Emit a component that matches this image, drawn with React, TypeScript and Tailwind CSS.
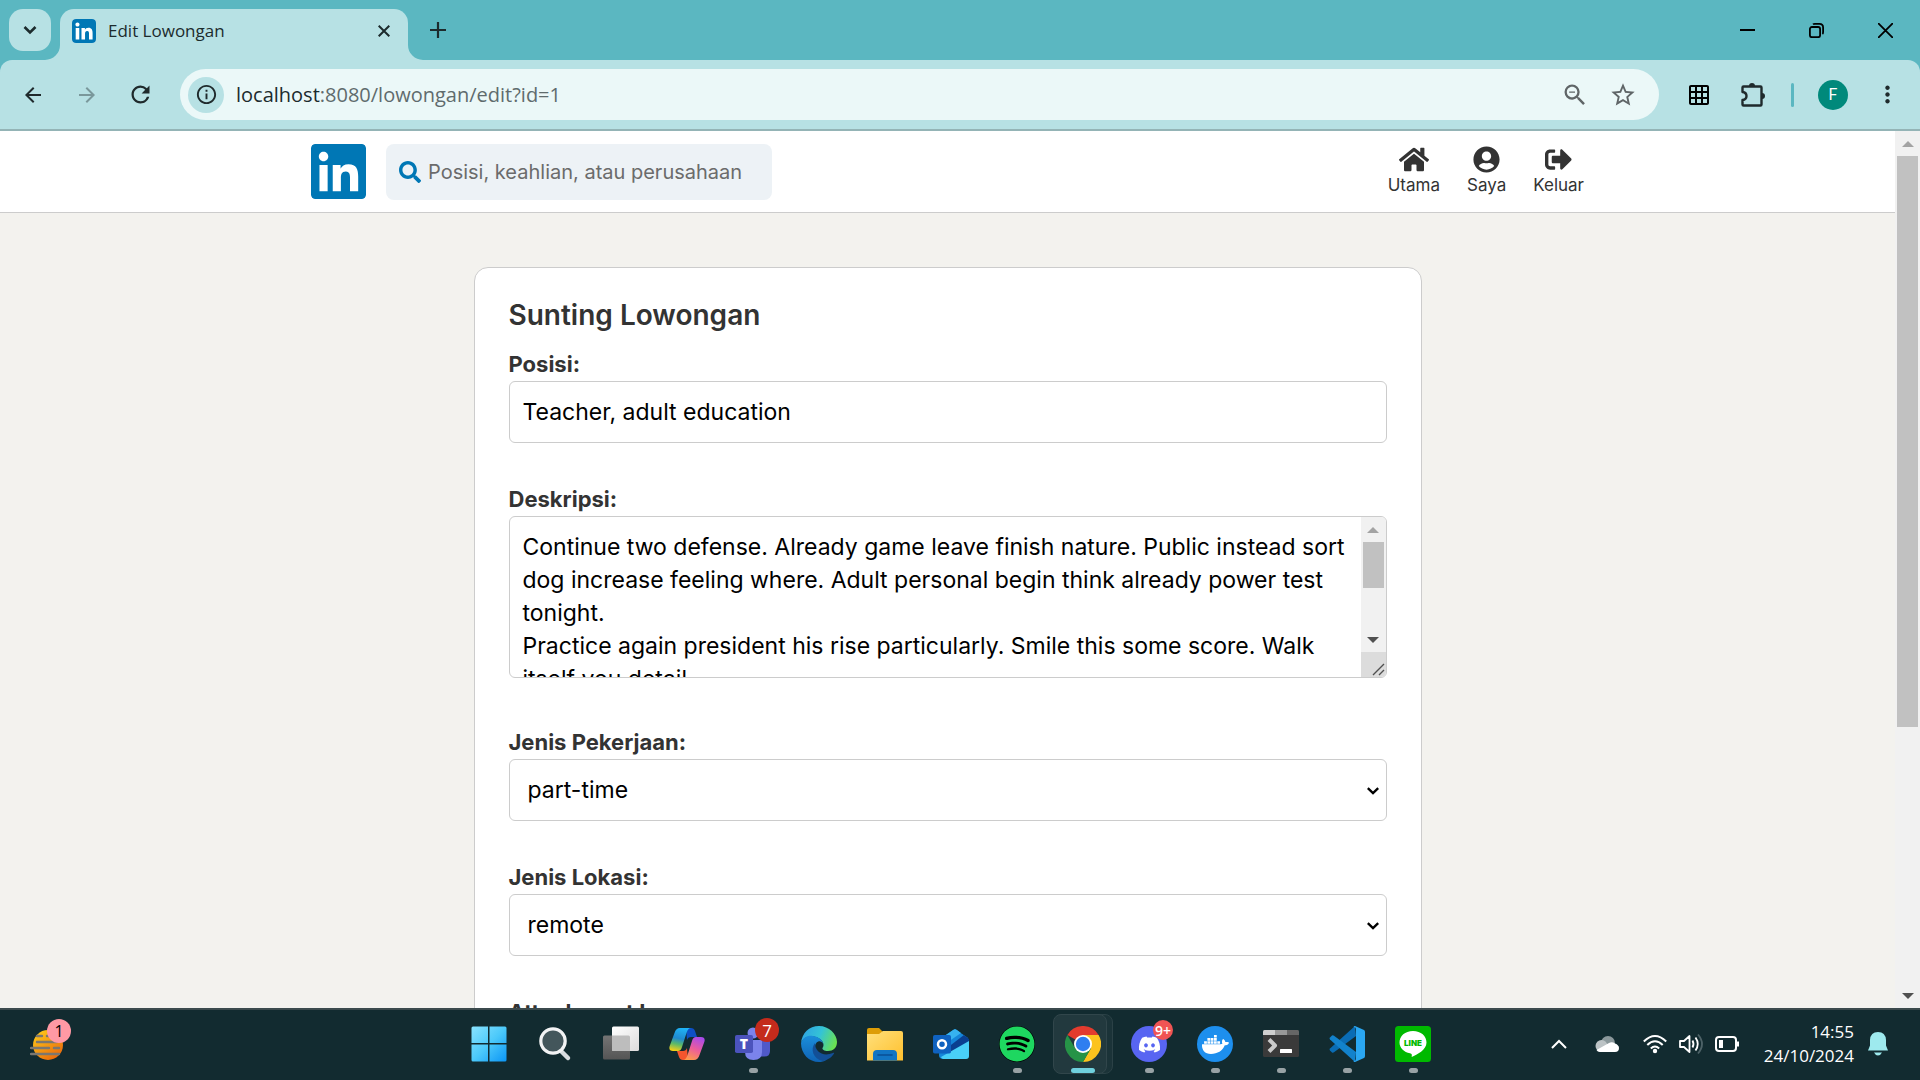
import React from "react";
import { FaHome, FaUserCircle, FaSignOutAlt, FaSearch, FaLinkedin, FaSpotify, FaDiscord, FaDocker } from "react-icons/fa";
import {
  MdArrowBack,
  MdArrowForward,
  MdRefresh,
  MdInfoOutline,
  MdZoomOut,
  MdStarOutline,
  MdGridOn,
  MdMoreVert,
} from "react-icons/md";

const description =
  "Continue two defense. Already game leave finish nature. Public instead sort dog increase feeling where. Adult personal begin think already power test tonight.\nPractice again president his rise particularly. Smile this some score. Walk itself you detail.";

function TabCorner({ side }: { side: "left" | "right" }) {
  return (
    <svg viewBox="0 0 15 15" className="size-[15px] self-end" fill="#b7e1e4" aria-hidden="true">
      <path d={side === "left" ? "M15 0V15H0A15 15 0 0 0 15 0Z" : "M0 0V15H15A15 15 0 0 1 0 0Z"} />
    </svg>
  );
}

function LinkedinMark({ className }: { className?: string }) {
  return (
    <span className="grid bg-white">
      <FaLinkedin className={className} color="#0077b5" viewBox="0 32 448 448" />
    </span>
  );
}

function TabStrip() {
  return (
    <div className="flex h-[60px] items-center pl-[9px] text-black">
      <button aria-label="Cari tab" className="grid size-[42px] shrink-0 place-items-center rounded-[14px] bg-[#b7e1e4]">
        <svg viewBox="0 0 14 10" className="w-3.5" fill="none" stroke="#1c2b2d" strokeWidth="2.6">
          <path d="M1.5 2 7 7.5 12.5 2" />
        </svg>
      </button>
      <div className="-ml-1.5 flex h-full items-end">
        <TabCorner side="left" />
        <div className="flex h-[51px] w-[348px] items-center rounded-t-[14px] bg-[#b7e1e4] pr-4 pb-2 pl-3">
          <span className="grid size-6 place-items-center overflow-hidden rounded-sm">
            <LinkedinMark className="size-6" />
          </span>
          <span className="ml-3 flex-1 font-['Open_Sans',sans-serif] text-[17px] text-[#1c2b2d]">Edit Lowongan</span>
          <button aria-label="Tutup tab" className="grid size-4 place-items-center">
            <svg viewBox="0 0 12 12" className="size-3" stroke="#1c2b2d" strokeWidth="2">
              <path d="M.7.7 11.3 11.3M11.3.7.7 11.3" />
            </svg>
          </button>
        </div>
        <TabCorner side="right" />
      </div>
      <button aria-label="Tab baru" className="ml-1.5 grid size-[18px] place-items-center">
        <svg viewBox="0 0 16 16" className="size-4" stroke="#1c2b2d" strokeWidth="2.2">
          <path d="M8 0V16M0 8H16" />
        </svg>
      </button>
      <div className="ml-auto flex h-full">
        <button aria-label="Minimalkan" className="grid w-[69px] place-items-center">
          <svg viewBox="0 0 15 15" className="size-[15px]" stroke="black" strokeWidth="2">
            <path d="M0 7H15" />
          </svg>
        </button>
        <button aria-label="Pulihkan" className="grid w-[69px] place-items-center">
          <svg viewBox="0 0 15 15" className="size-[15px]" fill="none" stroke="black" strokeWidth="1.8">
            <rect x="0.9" y="4" width="10.2" height="10.2" rx="2" />
            <path d="M4 1.4Q4.5 .9 6 .9H10.5Q14.1 .9 14.1 4.5V9Q14.1 10.5 13.4 11" />
          </svg>
        </button>
        <button aria-label="Tutup" className="grid w-[69px] place-items-center">
          <svg viewBox="0 0 15 15" className="size-[15px]" stroke="black" strokeWidth="1.8">
            <path d="M0 0 15 15M15 0 0 15" />
          </svg>
        </button>
      </div>
    </div>
  );
}

function ExtensionIcon() {
  return (
    <svg viewBox="0 0 26 26" className="size-[26px]" fill="none" stroke="#1f2a2c" strokeWidth="2.4" strokeLinejoin="round">
      <path d="M3.500 4.500H20.500Q21.500 4.500 21.500 5.500V22.500Q21.500 23.500 20.500 23.500H3.500Q2.500 23.500 2.500 22.500V18Q6.500 17.500 6.500 14T2.500 10V5.500Q2.500 4.500 3.500 4.500Z" />
      <path d="M9 4A3 3 0 0 1 15 4ZM22 11A3 3 0 0 1 22 17Z" fill="#1f2a2c" stroke="none" />
    </svg>
  );
}

function Toolbar() {
  return (
    <div className="flex h-[71px] items-center rounded-t-[12px] border-b-2 border-[#94b4b6] bg-[#b7e1e4] pr-[19px] pl-[21px] text-[#1f2a2c]">
      <button aria-label="Kembali" className="mr-[30px]"><MdArrowBack size={24} /></button>
      <button aria-label="Maju" className="mr-7 text-[#7a989b]"><MdArrowForward size={24} /></button>
      <button aria-label="Muat ulang" className="mr-[26px]"><MdRefresh size={27} /></button>
      <div className="flex h-[51px] flex-1 items-center rounded-full bg-[#ebf8f8] pr-[22px] pl-2">
        <button aria-label="Info situs" className="grid size-9 place-items-center rounded-full bg-[#b7e1e4]">
          <MdInfoOutline size={23} />
        </button>
        <span className="ml-3 flex-1 font-['Open_Sans',sans-serif] text-[20px] text-[#5f6b6d]">
          <span className="text-[#1c2b2d]">localhost</span>:8080/lowongan/edit?id=1
        </span>
        <button aria-label="Perkecil" className="mr-5 text-[#5f6567]"><MdZoomOut size={28} /></button>
        <button aria-label="Tandai" className="text-[#5f6567]"><MdStarOutline size={28} /></button>
      </div>
      <button aria-label="Kisi" className="ml-7 text-black"><MdGridOn size={24} /></button>
      <button aria-label="Ekstensi" className="ml-[29px]"><ExtensionIcon /></button>
      <span className="ml-[25px] h-6 w-[3px] rounded-full bg-[#5bb7c1]" />
      <button aria-label="Profil" className="ml-6 grid size-[30px] place-items-center rounded-full bg-[#00897b] font-['Roboto',sans-serif] text-[16px] text-white">
        F
      </button>
      <button aria-label="Menu" className="ml-[26px]"><MdMoreVert size={27} /></button>
    </div>
  );
}

const navItems = [
  { label: "Utama", Icon: FaHome, iconClass: "h-[27px] w-[30px]" },
  { label: "Saya", Icon: FaUserCircle, iconClass: "size-[27px]" },
  { label: "Keluar", Icon: FaSignOutAlt, iconClass: "size-[27px]" },
];

function SiteHeader() {
  return (
    <header className="border-b border-[#ccc] bg-white">
      <div className="mx-auto flex h-[81px] max-w-[1273px] items-center">
        <a href="#beranda" aria-label="LinkedIn" className="overflow-hidden rounded-[4px]">
          <LinkedinMark className="size-[55px]" />
        </a>
        <label className="ml-5 flex h-14 w-[386px] items-center rounded-lg bg-[#edf2f6] pl-[13px]">
          <FaSearch size={22} color="#0077b5" aria-label="Cari" />
          <input
            placeholder="Posisi, keahlian, atau perusahaan"
            className="ml-[7px] min-w-0 flex-1 bg-transparent text-[20px] outline-none placeholder:text-[#6b6b6b]"
          />
        </label>
        <nav className="ml-auto flex gap-[27px] text-[#333]">
          {navItems.map(({ label, Icon, iconClass }) => (
            <a key={label} href={`#${label.toLowerCase()}`} className="flex flex-col items-center text-[17px] leading-6">
              <Icon className={iconClass} />
              {label}
            </a>
          ))}
        </nav>
      </div>
    </header>
  );
}

function Triangle({ up = false, color }: { up?: boolean; color: string }) {
  return (
    <svg viewBox="0 0 12 6" className="w-3" fill={color} aria-hidden="true">
      <path d={up ? "M0 6 6 0 12 6Z" : "M0 0 6 6 12 0Z"} />
    </svg>
  );
}

function Scrollbar({ thumb }: { thumb: string }) {
  return (
    <div className="flex min-h-0 w-[25px] flex-1 flex-col items-center bg-[#f1f1f1]">
      <span className="grid h-[25px] shrink-0 place-items-center"><Triangle up color="#a3a3a3" /></span>
      <div className="min-h-0 w-full flex-1 px-0.5"><div className={`bg-[#c1c1c1] ${thumb}`} /></div>
      <span className="grid h-[25px] shrink-0 place-items-center"><Triangle color="#505050" /></span>
    </div>
  );
}

const labelClass = "block text-[22px] leading-[33px] font-bold text-[#333]";

function SelectField({ id, label, value, options }: { id: string; label: string; value: string; options: string[] }) {
  return (
    <div>
      <label htmlFor={id} className={labelClass}>{label}</label>
      <div className="relative">
        <select
          id={id}
          defaultValue={value}
          className="block h-[62px] w-full appearance-none rounded-md border border-[#ccc] bg-white px-[18px] text-[23px] text-black"
        >
          {options.map((o) => <option key={o}>{o}</option>)}
        </select>
        <svg viewBox="0 0 12 8" className="pointer-events-none absolute top-7 right-2 w-3" fill="none" stroke="black" strokeWidth="2.4">
          <path d="M.8 1.2 6 6.2 11.2 1.2" />
        </svg>
      </div>
    </div>
  );
}

function EditForm() {
  return (
    <form className="mx-auto mt-[54px] max-w-[948px] rounded-[14px] border border-[#ccc] bg-white px-[34px] pt-[27px]">
      <h1 className="text-[28px] leading-10 font-semibold text-[#333]">Sunting Lowongan</h1>
      <div className="mt-[13px] flex flex-col gap-10">
        <div>
          <label htmlFor="posisi" className={labelClass}>Posisi:</label>
          <input
            id="posisi"
            defaultValue="Teacher, adult education"
            className="block h-[62px] w-full rounded-md border border-[#ccc] px-[13px] text-[23px] text-black"
          />
        </div>
        <div className="mb-2">
          <label htmlFor="deskripsi" className={labelClass}>Deskripsi:</label>
          <div className="flex h-[162px] overflow-hidden rounded-md border border-[#ccc]">
            <textarea
              id="deskripsi"
              defaultValue={description}
              className="min-w-0 flex-1 resize-none overflow-hidden pt-[14px] pr-2 pl-[13px] text-[23px] leading-[33px] text-black outline-none"
            />
            <div className="flex flex-col">
              <Scrollbar thumb="h-[46px]" />
              <svg viewBox="0 0 25 25" className="size-[25px] bg-[#dcdcdc]" stroke="#505050" strokeWidth="1.4">
                <path d="M12 23 23 12M18 23 23 18" />
              </svg>
            </div>
          </div>
        </div>
        <SelectField id="jenis-pekerjaan" label="Jenis Pekerjaan:" value="part-time" options={["full-time", "part-time", "internship"]} />
        <SelectField id="jenis-lokasi" label="Jenis Lokasi:" value="remote" options={["on-site", "hybrid", "remote"]} />
        <h2 className={labelClass}>Attachment Lowongan:</h2>
      </div>
    </form>
  );
}

function WindowsIcon() {
  return (
    <svg viewBox="0 0 36 36" className="size-9">
      <defs>
        <linearGradient id="win" gradientUnits="userSpaceOnUse" x1="0" y1="0" x2="36" y2="36">
          <stop stopColor="#8be4ff" /><stop offset=".5" stopColor="#4cc9fa" /><stop offset="1" stopColor="#0994f5" />
        </linearGradient>
      </defs>
      <path fill="url(#win)" d="M2 .5H17V17H.5V2Q.5 .5 2 .5ZM18.5 .5H34Q35.5 .5 35.5 2V17H18.5ZM.5 18.5H17V35.5H2Q.5 35.5 .5 34ZM18.5 18.5H35.5V34Q35.5 35.5 34 35.5H18.5Z" />
    </svg>
  );
}

function SearchIcon() {
  return (
    <svg viewBox="0 0 36 36" className="size-9">
      <path d="M23 24 31 32" stroke="#d9dde0" strokeWidth="4.5" strokeLinecap="round" />
      <circle cx="16" cy="15" r="12.2" fill="#43565b" stroke="#f2f3f4" strokeWidth="3.2" />
    </svg>
  );
}

function TaskViewIcon() {
  return (
    <svg viewBox="0 0 36 36" className="size-9">
      <defs>
        <linearGradient id="tv" x2="1" y2="1"><stop stopColor="#fff" /><stop offset="1" stopColor="#dcdcdc" /></linearGradient>
        <linearGradient id="tvb" x2="0" y2="1"><stop stopColor="#747474" /><stop offset="1" stopColor="#555" /></linearGradient>
      </defs>
      <rect x="0" y="9.5" width="27" height="24" rx="1.5" fill="url(#tvb)" />
      <rect x="9" y=".5" width="27" height="24.5" rx="1.5" fill="url(#tv)" />
      <path d="M9 9.5H25.5Q27 9.5 27 11V25H10.5Q9 25 9 23.5Z" fill="#bdbdbd" />
    </svg>
  );
}

function CopilotIcon() {
  return (
    <svg viewBox="0 0 36 36" className="size-9">
      <defs>
        <linearGradient id="cpa" x1=".5" x2=".3" y2="1"><stop stopColor="#1fb2f5" /><stop offset=".45" stopColor="#2089cf" /><stop offset=".7" stopColor="#5ab96a" /><stop offset="1" stopColor="#f5cf16" /></linearGradient>
        <linearGradient id="cpb" x1=".7" x2=".3" y2="1"><stop stopColor="#a94bea" /><stop offset=".5" stopColor="#ec5c9c" /><stop offset="1" stopColor="#fd9a4b" /></linearGradient>
      </defs>
      <path d="M17 2H22Q25 2 26 5L28 11H22Q19 11 18 14Z" fill="#0d4fc4" />
      <path d="M19 34H14Q11 34 10 31L8 25H14Q17 25 18 22Z" fill="#f4552e" />
      <path d="M22 2H11Q7 2 5.5 7L.7 20Q-.8 25 4 25H9Q12 25 13 21L17.5 7Q19 2 22 2Z" fill="url(#cpa)" />
      <path d="M14 34H25Q29 34 30.5 29L35.3 16Q36.800 11 32 11H27Q24 11 23 15L18.5 29Q17 34 14 34Z" fill="url(#cpb)" />
    </svg>
  );
}

function TeamsIcon() {
  return (
    <span className="relative">
      <svg viewBox="0 0 36 36" className="size-9">
        <circle cx="18" cy="7" r="5.5" fill="#7b83eb" />
        <circle cx="29" cy="9" r="4" fill="#5059c9" />
        <path d="M24 14H35V25Q35 30.5 29.5 30.5H24Z" fill="#5059c9" />
        <path d="M10 14H27V26Q27 34 18.5 34T10 26Z" fill="#7b83eb" />
        <rect x="0" y="9" width="18" height="18" rx="1.8" fill="#4b53bc" />
        <text x="9" y="23" textAnchor="middle" fontFamily="Open Sans" fontWeight="800" fontSize="14" fill="white">T</text>
      </svg>
      <span className="absolute -top-2 left-[20px] grid size-6 place-items-center rounded-full bg-[#c42b1c] font-['Open_Sans',sans-serif] text-[17px] text-white">7</span>
    </span>
  );
}

function EdgeIcon() {
  return (
    <svg viewBox="0 0 36 36" className="size-9">
      <defs>
        <linearGradient id="eda" x1="0" y1=".3" x2="1" y2=".6"><stop stopColor="#2ea3e3" /><stop offset=".5" stopColor="#34c3d6" /><stop offset="1" stopColor="#6be24f" /></linearGradient>
        <linearGradient id="edb" x2="0" y2="1"><stop stopColor="#1b8edb" /><stop offset="1" stopColor="#0f63b4" /></linearGradient>
      </defs>
      <path d="M0 17C1 7 8 0 18 0S36 8 36 16C36 22 32 25 27 25C23 25 21 23.5 21.5 22C24 19 22 13 15 11C8 9 2 12 0 17Z" fill="url(#eda)" />
      <path d="M0 17C2 11 7 9 12 10C18 11 22 14 22 18C21 14 14 14 14 22C14 29 19 33 25 34C22 36 19 36 18 36C8 36 0 28 0 17Z" fill="url(#edb)" />
      <path d="M14 17C9 23 12 33 22 35C27 34 31 31 33 27.5C33.5 26.5 33 26.5 32 27C22 31 14 26 14 17Z" fill="#134f96" />
    </svg>
  );
}

function ExplorerIcon() {
  return (
    <svg viewBox="0 0 36 36" className="size-9">
      <defs><linearGradient id="ex" x2="1" y2="1"><stop stopColor="#ffe07c" /><stop offset="1" stopColor="#ffc02d" /></linearGradient></defs>
      <path d="M0 4Q0 2 2 2H12L16 6V12H0Z" fill="#dd9d07" />
      <path d="M0 8H12L16 5H34Q36 5 36 7V34.5H0Z" fill="url(#ex)" />
      <path d="M6 34.5V28Q6 24 10 24H26Q30 24 30 28V34.5Z" fill="#1275c4" />
      <path d="M11 29H25" stroke="#0a4f95" strokeWidth="1.6" strokeLinecap="round" />
    </svg>
  );
}

function OutlookIcon() {
  return (
    <svg viewBox="0 0 36 36" className="size-9">
      <path d="M7 13 22 3 35 12V29Q35 33 31 33H10Q6 33 6 29Z" fill="#1586d9" />
      <path d="M7 13 20 4Q22 2.5 24 4L28 7 12 18Z" fill="#36b3f0" />
      <path d="M14 22 31 9 36 13V16L18 28Z" fill="#0a3f90" />
      <path d="M36 15V30Q36 33 33 33H10Q8 32 8 31Z" fill="#49d0f8" />
      <rect x="0" y="9" width="18" height="18.5" rx="1.8" fill="#0f62c0" />
      <circle cx="9" cy="18.2" r="4" fill="none" stroke="white" strokeWidth="2.5" />
    </svg>
  );
}

function ChromeIcon() {
  return (
    <svg viewBox="0 0 36 36" className="size-9">
      <path d="M18 18 2.4 9A18 18 0 0 1 33.6 9L18 9Z" fill="#e33b2e" />
      <path d="M18 9H33.6A18 18 0 0 1 18 36L25.8 22.5Z" fill="#fcc31e" />
      <path d="M10.2 22.5 2.4 9A18 18 0 0 0 18 36L25.8 22.5Z" fill="#269347" />
      <circle cx="18" cy="18" r="9" fill="white" />
      <circle cx="18" cy="18" r="7.2" fill="#2f7ef0" />
    </svg>
  );
}

function DiscordIcon() {
  return (
    <span className="relative grid size-9 place-items-center rounded-full bg-[#5865f2] text-white">
      <FaDiscord size={23} />
      <span className="absolute -top-[6px] left-[22px] grid size-5 place-items-center rounded-full bg-[#f05454] font-['Open_Sans',sans-serif] text-[14px] font-semibold">9+</span>
    </span>
  );
}

function TerminalIcon() {
  return (
    <svg viewBox="0 0 36 36" className="size-9">
      <rect y="4" width="36" height="27" rx="1.5" fill="#3a3a3a" />
      <path d="M0 9V5.5Q0 4 1.5 4H12V9Z" fill="#cfcfcf" />
      <path d="M12 4H24V9H12Z" fill="#999" />
      <path d="M24 4H34.5Q36 4 36 5.5V9H24Z" fill="#666" />
      <path d="M6 13.5 12 19.5 6 25.5" fill="none" stroke="#c9c9c9" strokeWidth="4" strokeLinejoin="round" />
      <rect x="17" y="23" width="12" height="4" rx=".5" fill="white" />
    </svg>
  );
}

function VsCodeIcon() {
  return (
    <svg viewBox="0 0 36 36" className="size-9">
      <path d="M26 0 1 22.5Q0 23.5 1 24.5L3 26.5Q4 27 5 26.3L27 10Z" fill="#0a6cb4" />
      <path d="M26 36 1 13.5Q0 12.5 1 11.5L3 9.5Q4 9 5 9.7L27 26Z" fill="#1282cc" />
      <path d="M26 0 35 4Q36 4.5 36 6V30Q36 31.5 35 32L26 36Q24.5 35.8 24.5 35Q27 35 27 33V3Q27 1 24.5 1Q25 .2 26 0Z" fill="#2aa7f2" />
    </svg>
  );
}

function LineIcon() {
  return (
    <svg viewBox="0 0 36 36" className="size-9">
      <rect width="36" height="36" rx="3.5" fill="#00b900" />
      <path d="M18 5C10 5 4.5 10 4.5 16.5C4.5 22 9 26.2 15 27.2C17 27.6 17 28.5 16.7 31C22 28.5 31.5 24 31.5 16.5C31.5 10 26 5 18 5Z" fill="white" />
      <text x="18" y="20" textAnchor="middle" fontFamily="Inter" fontWeight="900" fontSize="8" fill="#00b900">LINE</text>
    </svg>
  );
}

const taskbarApps = [
  { name: "Mulai", icon: <WindowsIcon />, running: false },
  { name: "Cari", icon: <SearchIcon />, running: false },
  { name: "Tampilan tugas", icon: <TaskViewIcon />, running: false },
  { name: "Copilot", icon: <CopilotIcon />, running: false },
  { name: "Teams", icon: <TeamsIcon />, running: true },
  { name: "Edge", icon: <EdgeIcon />, running: false },
  { name: "File Explorer", icon: <ExplorerIcon />, running: false },
  { name: "Outlook", icon: <OutlookIcon />, running: false },
  { name: "Spotify", icon: <span className="grid size-9 place-items-center rounded-full bg-black"><FaSpotify size={36} color="#1ed760" /></span>, running: true },
  { name: "Chrome", icon: <ChromeIcon />, running: true, active: true },
  { name: "Discord", icon: <DiscordIcon />, running: true },
  { name: "Docker", icon: <span className="grid size-9 place-items-center rounded-full bg-[#1d8fee]"><FaDocker size={27} color="white" /></span>, running: true },
  { name: "Terminal", icon: <TerminalIcon />, running: true },
  { name: "VS Code", icon: <VsCodeIcon />, running: true },
  { name: "LINE", icon: <LineIcon />, running: true },
];

function Taskbar() {
  return (
    <footer className="flex h-[72px] shrink-0 items-center border-t-2 border-[#3b4a4d] bg-[#122b30] text-white">
      <div className="flex w-[456px] shrink-0 items-center pl-[30px]">
        <button aria-label="Cuaca" className="relative">
          <svg viewBox="0 0 36 36" className="size-9">
            <defs><linearGradient id="sun" x2=".7" y2="1"><stop stopColor="#ffd21a" /><stop offset="1" stopColor="#ea6a0c" /></linearGradient></defs>
            <circle cx="18" cy="18" r="15" fill="url(#sun)" />
            <path d="M7 9H12M17 9H24M7 15H27M1 21H19M24 21H29M1 27H29" stroke="#7b7770" strokeWidth="2.4" strokeLinecap="round" />
          </svg>
          <span className="absolute -top-2 left-[17px] grid size-6 place-items-center rounded-full bg-[#ff99a4] font-['Open_Sans',sans-serif] text-[16px] text-black">1</span>
        </button>
      </div>
      <div className="flex h-full shrink-0">
        {taskbarApps.map((app) => (
          <button key={app.name} aria-label={app.name} className="relative grid w-[66px] place-items-center pb-0.5">
            {app.active && (
              <>
                <span className="absolute top-1 left-[9px] h-[60px] w-[54px] rounded-lg border border-[#2b4146] bg-[#1b3338]" />
                <span className="absolute top-1 left-[3px] h-[60px] w-[54px] rounded-lg border border-[#31464b] bg-[#22393e]" />
              </>
            )}
            <span className="relative grid">{app.icon}</span>
            {app.running && (
              <span className={app.active ? "absolute bottom-[7px] h-[5px] w-6 rounded-full bg-[#6fd0dd]" : "absolute bottom-[7px] h-[5px] w-[9px] rounded-full bg-[#98a2a5]"} />
            )}
          </button>
        ))}
      </div>
      <div className="ml-auto flex items-center pr-[30px] pb-0.5">
        <button aria-label="Ikon tersembunyi">
          <svg viewBox="0 0 16 10" className="w-4" fill="none" stroke="white" strokeWidth="2"><path d="M1 9 8 2 15 9" /></svg>
        </button>
        <svg viewBox="0 0 24 24" className="ml-7 size-6">
          <circle cx="13" cy="11" r="7" fill="#8b989b" />
          <circle cx="6.5" cy="14" r="6" fill="#bcc3c5" />
          <path d="M1.5 18 14 11Q17 9.500 20 11.5Q24 13 24 16Q24 20 20 20H5Q2.5 20 1.5 18Z" fill="white" />
        </svg>
        <svg viewBox="0 0 24 24" className="ml-6 size-6" fill="none" stroke="white" strokeWidth="2">
          <path d="M.8 9.5Q12-1.5 23.2 9.5M4.3 13Q12 5.5 19.7 13M7.8 16.5Q12 12.5 16.2 16.5" />
          <circle cx="12" cy="19" r="2.2" fill="white" stroke="none" />
        </svg>
        <svg viewBox="0 0 24 24" className="ml-3 size-6" fill="none" stroke="white" strokeWidth="1.8" strokeLinejoin="round">
          <path d="M1 9H5L10.5 4V20L5 15H1ZM13.5 8.5Q15.5 12 13.5 15.5M16.5 5.5Q21 12 16.5 18.5" />
          <path d="M19 2.5Q27 12 19 21.5" stroke="#4d6267" />
        </svg>
        <svg viewBox="0 0 24 24" className="ml-3 size-6" fill="none" stroke="white" strokeWidth="2">
          <rect x="1" y="5" width="20" height="14" rx="3" />
          <path d="M23 9.5V14.5" />
          <rect x="4" y="8" width="4" height="8" fill="white" stroke="none" />
        </svg>
        <div className="ml-[25px] text-right font-['Open_Sans',sans-serif] text-[17px] leading-6">
          <div>14:55</div>
          <div>24/10/2024</div>
        </div>
        <button aria-label="Notifikasi" className="ml-3">
          <svg viewBox="0 0 24 28" className="w-6" fill="#9eeaee">
            <path d="M12 2Q4.500 2 4 10V15.500L2 20.500H22L20 15.500V10Q19.500 2 12 2ZM8 22.500Q9.500 25.500 12 25.500T16 22.500Z" />
          </svg>
        </button>
      </div>
    </footer>
  );
}

export default function App() {
  return (
    <div className="flex h-screen flex-col overflow-hidden bg-[#5bb7c1]">
      <TabStrip />
      <Toolbar />
      <div className="flex min-h-0 flex-1 font-['Inter',sans-serif]">
        <main className="min-w-0 flex-1 overflow-hidden bg-[#f3f2ee]">
          <SiteHeader />
          <EditForm />
        </main>
        <div className="flex">
          <Scrollbar thumb="h-[69%]" />
        </div>
      </div>
      <Taskbar />
    </div>
  );
}
